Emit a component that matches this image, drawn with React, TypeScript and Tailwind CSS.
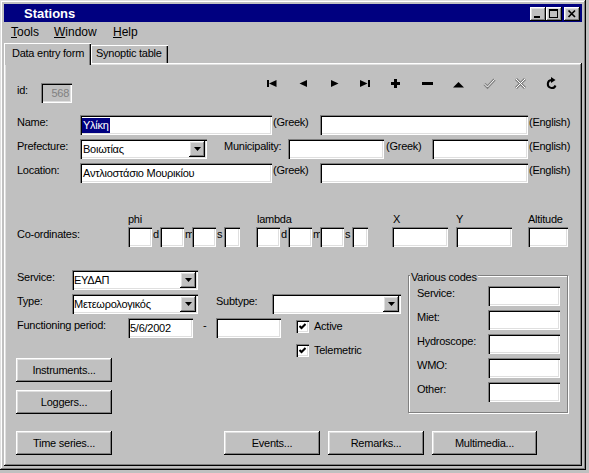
import React from "react";

const SUNKEN =
  "shadow-[inset_1px_1px_#808080,inset_2px_2px_#000,inset_-1px_-1px_#fff,inset_-2px_-2px_#dfdfdf]";
const RAISED =
  "shadow-[inset_-1px_-1px_#000,inset_1px_1px_#fff,inset_-2px_-2px_#808080,inset_2px_2px_#dfdfdf]";

type P = { className?: string; children?: React.ReactNode };

function Field({ className = "", children, gray = false }: P & { gray?: boolean }) {
  return (
    <div
      className={`h-[20px] shrink-0 flex items-center px-[3px] pt-[1px] leading-[15px] whitespace-nowrap overflow-hidden ${
        gray ? "bg-[#c0c0c0]" : "bg-white"
      } ${SUNKEN} ${className}`}
    >
      {children}
    </div>
  );
}

function Combo({ className = "", children }: P) {
  return (
    <div className={`h-[20px] shrink-0 flex items-center pl-[3px] pr-[2px] bg-white ${SUNKEN} ${className}`}>
      <span className="flex-1 pt-[1px] leading-[15px] whitespace-nowrap overflow-hidden">{children}</span>
      <div className={`w-[16px] h-[16px] shrink-0 bg-[#c0c0c0] flex items-center justify-center ${RAISED}`}>
        <svg width="7" height="4" viewBox="0 0 7 4">
          <polygon points="0,0 7,0 3.5,4" fill="#000" />
        </svg>
      </div>
    </div>
  );
}

function Btn({ className = "", children }: P) {
  return (
    <div
      className={`h-[24px] shrink-0 flex items-center justify-center bg-[#c0c0c0] leading-[15px] whitespace-nowrap ${RAISED} ${className}`}
    >
      {children}
    </div>
  );
}

function Lbl({ className = "", children }: P) {
  return <span className={`shrink-0 leading-[15px] whitespace-nowrap ${className}`}>{children}</span>;
}

function Check({ className = "", children }: P) {
  return (
    <div className={`flex items-center h-[13px] ${className}`}>
      <div className={`w-[13px] h-[13px] bg-white flex items-center justify-center ${SUNKEN}`}>
        <svg width="7" height="7" viewBox="0 0 7 7">
          <polyline points="0.5,3 2.5,5 6.5,1" fill="none" stroke="#000" strokeWidth="2" />
        </svg>
      </div>
      <span className="ml-[5px] leading-[15px]">{children}</span>
    </div>
  );
}

function Ico({ children }: P) {
  return (
    <div className="w-[31px] h-[13px] flex items-center justify-center">
      <svg width="13" height="13" viewBox="0 0 13 13">
        {children}
      </svg>
    </div>
  );
}

function CapBtn({ className = "", children }: P) {
  return (
    <div className={`w-[16px] h-[14px] bg-[#c0c0c0] flex ${RAISED} ${className}`}>
      <svg width="16" height="14" viewBox="0 0 16 14">
        {children}
      </svg>
    </div>
  );
}

export default function App() {
  return (
    <div className="w-[589px] h-[473px] bg-[#c0c0c0] overflow-hidden font-['Liberation_Sans',Arial,sans-serif] text-[11px] text-black">
      <div className="w-[586px] h-[470px] p-[4px] flex flex-col bg-[#c0c0c0] shadow-[inset_-1px_-1px_#000,inset_1px_1px_#dfdfdf,inset_-2px_-2px_#808080,inset_2px_2px_#fff]">
        {/* Title bar */}
        <div className="h-[18px] shrink-0 bg-[#000080] flex items-center">
          <span className="pl-[20px] pt-[2px] text-white font-bold text-[13px] leading-[16px]">Stations</span>
          <div className="ml-auto mr-[2px] mt-[2px] flex">
            <CapBtn>
              <rect x="4" y="9" width="6" height="2" fill="#000" shapeRendering="crispEdges" />
            </CapBtn>
            <CapBtn>
              <rect x="3.5" y="2.5" width="8" height="8" fill="none" stroke="#000" shapeRendering="crispEdges" />
              <rect x="3" y="2" width="9" height="2" fill="#000" shapeRendering="crispEdges" />
            </CapBtn>
            <CapBtn className="ml-[2px]">
              <path d="M4.5 3.5 L11 10 M11 3.5 L4.5 10" stroke="#000" strokeWidth="1.7" fill="none" />
            </CapBtn>
          </div>
        </div>

        {/* Menu bar */}
        <div className="h-[19px] shrink-0 flex items-center pt-[2px] text-[12px] leading-[15px]">
          <span className="ml-[7px] w-[43px]">
            <span className="underline">T</span>ools
          </span>
          <span className="w-[59px]">
            <span className="underline">W</span>indow
          </span>
          <span>
            <span className="underline">H</span>elp
          </span>
        </div>

        {/* Tabs */}
        <div className="h-[22px] shrink-0 flex items-end tracking-[-0.25px]">
          <div className="relative z-10 h-[22px] -mb-[2px] w-[87px] pl-[8px] pt-[3px] leading-[15px] whitespace-nowrap bg-[#c0c0c0] shadow-[inset_1px_1px_#fff,inset_-1px_0_#000,inset_-2px_0_#808080]">
            Data entry form
          </div>
          <div className="h-[18px] w-[77px] pl-[5px] pt-[1px] leading-[15px] whitespace-nowrap bg-[#c0c0c0] shadow-[inset_1px_1px_#fff,inset_-1px_0_#000,inset_-2px_0_#808080]">
            Synoptic table
          </div>
        </div>

        {/* Panel */}
        <div className={`flex-1 flex flex-col bg-[#c0c0c0] tracking-[-0.25px] ${RAISED}`}>
          {/* id + toolbar */}
          <div className="flex mt-[14px] h-[26px] shrink-0">
            <div className="w-[253px] mt-[6px] flex items-start">
              <Lbl className="ml-[13px] w-[24px]">id:</Lbl>
              <Field gray className="w-[31px] justify-end text-[#808080]">
                568
              </Field>
            </div>
            <div className="flex">
              <Ico>
                <rect x="1" y="3" width="2" height="7" fill="#000" shapeRendering="crispEdges" />
                <polygon points="3,6.5 10.5,3 10.5,10" fill="#000" />
              </Ico>
              <Ico>
                <polygon points="2.5,6.5 10,3 10,10" fill="#000" />
              </Ico>
              <Ico>
                <polygon points="3,3 10.5,6.5 3,10" fill="#000" />
              </Ico>
              <Ico>
                <polygon points="1,3 8.5,6.5 1,10" fill="#000" />
                <rect x="9" y="3" width="2" height="7" fill="#000" shapeRendering="crispEdges" />
              </Ico>
              <Ico>
                <rect x="4" y="2" width="3" height="9" fill="#000" shapeRendering="crispEdges" />
                <rect x="1" y="5" width="9" height="3" fill="#000" shapeRendering="crispEdges" />
              </Ico>
              <Ico>
                <rect x="1" y="5" width="11" height="3" fill="#000" shapeRendering="crispEdges" />
              </Ico>
              <Ico>
                <polygon points="1,10.5 6.5,5 12,10.5" fill="#000" />
              </Ico>
              <Ico>
                <path d="M1.5 7 L4.5 10 L11.5 2.5" fill="none" stroke="#808080" strokeWidth="3" />
                <path d="M1.5 7 L4.5 10 L11.5 2.5" fill="none" stroke="#fff" strokeWidth="1" />
              </Ico>
              <Ico>
                <path d="M2 2 L11 11 M11 2 L2 11" fill="none" stroke="#808080" strokeWidth="3" />
                <path d="M2 2 L11 11 M11 2 L2 11" fill="none" stroke="#fff" strokeWidth="1" />
              </Ico>
              <Ico>
                <path d="M6.5 3 A4 4 0 1 0 10.5 8.5" fill="none" stroke="#000" strokeWidth="2" />
                <polygon points="6,0 10.5,3 6,6" fill="#000" />
              </Ico>
            </div>
          </div>

          {/* Name */}
          <div className="flex items-start mt-[12px] h-[20px] shrink-0">
            <Lbl className="ml-[13px] w-[63px]">Name:</Lbl>
            <Field className="w-[192px] !px-[2px]">
              <span className="bg-[#000080] text-white pl-[1px] pr-[1px]">Υλίκη</span>
            </Field>
            <Lbl className="w-[48px] pl-[1px]">(Greek)</Lbl>
            <Field className="w-[208px]" />
            <Lbl className="pl-[1px]">(English)</Lbl>
          </div>

          {/* Prefecture */}
          <div className="flex items-start mt-[4px] h-[20px] shrink-0">
            <Lbl className="ml-[13px] w-[63px]">Prefecture:</Lbl>
            <Combo className="w-[127px]">Βοιωτίας</Combo>
            <Lbl className="ml-[17px] w-[64px]">Municipality:</Lbl>
            <Field className="w-[96px]" />
            <Lbl className="w-[48px] pl-[2px]">(Greek)</Lbl>
            <Field className="w-[96px]" />
            <Lbl className="pl-[1px]">(English)</Lbl>
          </div>

          {/* Location */}
          <div className="flex items-start mt-[4px] h-[20px] shrink-0">
            <Lbl className="ml-[13px] w-[63px]">Location:</Lbl>
            <Field className="w-[192px]">Αντλιοστάσιο Μουρικίου</Field>
            <Lbl className="w-[48px] pl-[1px]">(Greek)</Lbl>
            <Field className="w-[208px]" />
            <Lbl className="pl-[1px]">(English)</Lbl>
          </div>

          {/* Coordinates header */}
          <div className="flex mt-[29px] h-[15px] shrink-0 leading-[15px]">
            <span className="w-[124px] shrink-0" />
            <span className="w-[129px] shrink-0">phi</span>
            <span className="w-[136px] shrink-0">lambda</span>
            <span className="w-[63px] shrink-0">X</span>
            <span className="w-[72px] shrink-0">Y</span>
            <span>Altitude</span>
          </div>

          {/* Coordinates boxes */}
          <div className="flex items-start h-[20px] shrink-0">
            <Lbl className="ml-[13px] w-[111px]">Co-ordinates:</Lbl>
            <Field className="w-[24px]" />
            <Lbl className="w-[8px] pl-[1px]">d</Lbl>
            <Field className="w-[24px]" />
            <Lbl className="w-[8px] pl-[1px]">m</Lbl>
            <Field className="w-[24px]" />
            <Lbl className="w-[8px] pl-[1px]">s</Lbl>
            <Field className="w-[16px]" />
            <Field className="ml-[16px] w-[24px]" />
            <Lbl className="w-[8px] pl-[1px]">d</Lbl>
            <Field className="w-[24px]" />
            <Lbl className="w-[8px] pl-[1px]">m</Lbl>
            <Field className="w-[24px]" />
            <Lbl className="w-[8px] pl-[1px]">s</Lbl>
            <Field className="w-[16px]" />
            <Field className="ml-[24px] w-[56px]" />
            <Field className="ml-[8px] w-[56px]" />
            <Field className="ml-[16px] w-[40px]" />
          </div>

          {/* Lower section */}
          <div className="flex items-start mt-[23px] shrink-0">
            <div className="w-[404px] shrink-0 flex flex-col">
              <div className="flex items-start h-[20px]">
                <Lbl className="ml-[13px] w-[55px]">Service:</Lbl>
                <Combo className="w-[126px] !pl-[2px]">ΕΥΔΑΠ</Combo>
              </div>
              <div className="flex items-start h-[20px] mt-[4px]">
                <Lbl className="ml-[13px] w-[55px]">Type:</Lbl>
                <Combo className="w-[126px] !pl-[2px]">Μετεωρολογικός</Combo>
                <Lbl className="ml-[18px] w-[56px]">Subtype:</Lbl>
                <Combo className="w-[129px]" />
              </div>
              <div className="flex items-start mt-[4px]">
                <Lbl className="ml-[13px] w-[111px]">Functioning period:</Lbl>
                <Field className="w-[65px] !px-[2px]">5/6/2002</Field>
                <Lbl className="w-[23px] pl-[10px]">-</Lbl>
                <Field className="w-[65px]" />
                <div className="ml-[15px] mt-[2px] flex flex-col">
                  <Check>Active</Check>
                  <Check className="mt-[11px]">Telemetric</Check>
                </div>
              </div>
              <Btn className="mt-[1px] ml-[12px] w-[96px]">Instruments...</Btn>
              <Btn className="mt-[8px] ml-[12px] w-[96px]">Loggers...</Btn>
            </div>

            <div className="relative mt-[5px] w-[160px] h-[138px] shrink-0 border border-[#808080] shadow-[inset_1px_1px_#fff,1px_1px_#fff] flex flex-col pt-[10px]">
              <span className="absolute -top-[6px] left-[1px] px-[1px] bg-[#c0c0c0] leading-[15px] whitespace-nowrap">
                Various codes
              </span>
              {["Service:", "Miet:", "Hydroscope:", "WMO:", "Other:"].map((t, i) => (
                <div key={t} className={`flex items-start ${i ? "mt-[4px]" : ""}`}>
                  <Lbl className="ml-[8px] w-[71px]">{t}</Lbl>
                  <Field className="w-[72px]" />
                </div>
              ))}
            </div>
          </div>

          {/* Bottom buttons */}
          <div className="flex mt-[17px] shrink-0">
            <Btn className="ml-[12px] w-[96px]">Time series...</Btn>
            <Btn className="ml-[112px] w-[96px]">Events...</Btn>
            <Btn className="ml-[8px] w-[96px]">Remarks...</Btn>
            <Btn className="ml-[8px] w-[105px]">Multimedia...</Btn>
          </div>
        </div>
      </div>
    </div>
  );
}
